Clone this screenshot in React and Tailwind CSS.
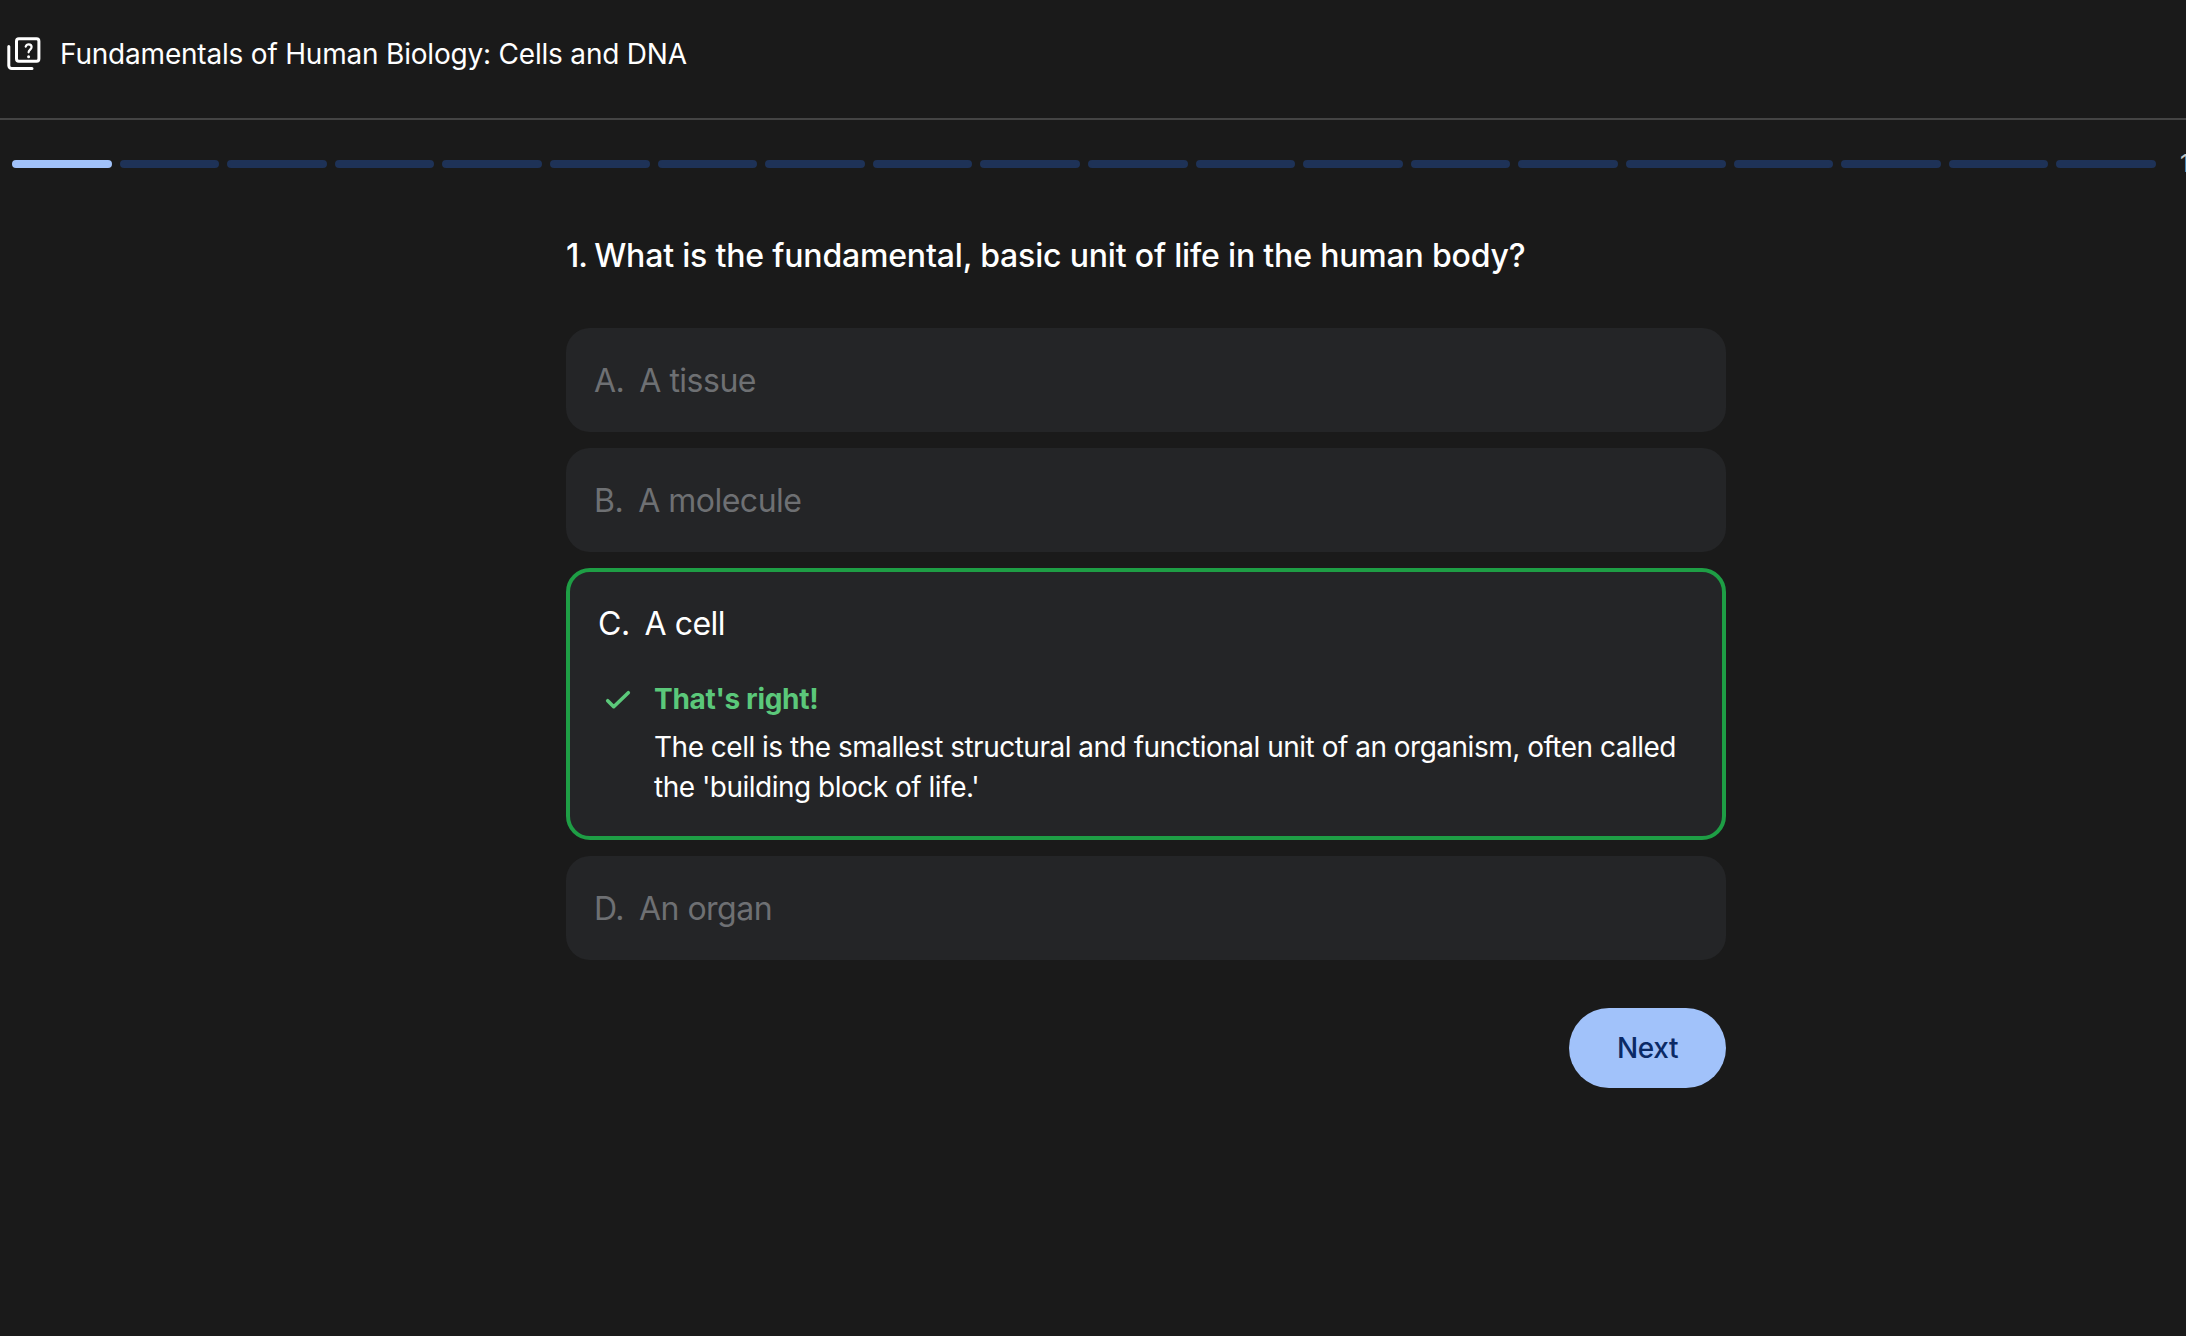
import React from "react";

const font = { fontFamily: "Inter, sans-serif" };
const bars = Array.from({ length: 20 }, (_, i) => i);

const QuizIcon = () => (
  <svg
    viewBox="0 0 40 40"
    className="h-10 w-10 shrink-0"
    fill="none"
    stroke="#ffffff"
    strokeLinecap="round"
    strokeLinejoin="round"
  >
    <rect x="12.5" y="4.8" width="22.4" height="22.4" rx="2.4" strokeWidth="3" />
    <path d="M4.8 12.5V31.5a3 3 0 0 0 3 3H28" strokeWidth="3" />
    <path
      d="M21.7 12.6c.5-1.5 1.6-2.2 3-2.2 1.7 0 2.9 1.1 2.9 2.7 0 2.4-3 2.6-3 5.2"
      strokeWidth="2.2"
    />
    <circle cx="24.6" cy="22.8" r="1.5" fill="#ffffff" stroke="none" />
  </svg>
);

const CheckIcon = () => (
  <svg
    viewBox="0 0 32 32"
    className="ml-1 mt-[5px] h-8 w-8 shrink-0"
    fill="none"
    stroke="#5bc87a"
    strokeWidth="3.6"
    strokeLinecap="round"
    strokeLinejoin="round"
  >
    <path d="M5.7 16.7l6 6L26.3 8.7" />
  </svg>
);

const Option = ({ letter, text }) => (
  <div className="flex h-[104px] items-center rounded-[24px] bg-[#242527] pl-[28px] pt-px text-[32px] tracking-[-0.5px] text-[#6e7073]">
    <span className="mr-[15px]">{letter}.</span>
    <span>{text}</span>
  </div>
);

const App = () => {
  return (
    <div
      className="h-[1336px] w-[2186px] overflow-hidden bg-[#1a1a1a] text-white"
      style={font}
    >
      <header className="flex h-[120px] items-center border-b-2 border-[#444444] pb-[10px] pl-[4px]">
        <QuizIcon />
        <h1 className="ml-4 text-[28px] leading-10 tracking-[-0.2px]">
          Fundamentals of Human Biology: Cells and DNA
        </h1>
      </header>

      <div className="flex h-[8px] items-center pl-3 pt-0 mt-[40px]">
        <div className="flex w-[2144px] shrink-0 gap-2">
          {bars.map((i) => (
            <div
              key={i}
              className={
                i === 0
                  ? "h-2 flex-1 rounded-full bg-[#a1c2fa]"
                  : "h-2 flex-1 rounded-full bg-[#1e3257]"
              }
            />
          ))}
        </div>
        <span className="ml-[24px] shrink-0 text-[24px] text-[#c4c7c5]">1/20</span>
      </div>

      <main className="ml-[566px] w-[1160px]">
        <h2 className="mb-[52px] mt-[68px] text-[32px] font-medium leading-10 tracking-[-0.18px]">
          <span className="tracking-[-1px]">1. </span>
          What is the fundamental, basic unit of life in the human body?
        </h2>

        <div className="flex flex-col gap-4">
          <Option letter="A" text="A tissue" />
          <Option letter="B" text="A molecule" />

          <div className="h-[272px] rounded-[24px] border-4 border-[#1e9e45] bg-[#242527] px-[28px] pt-[32px]">
            <div className="flex text-[32px] leading-10 tracking-[-0.5px]">
              <span className="mr-[15px]">C.</span>
              <span>A cell</span>
            </div>
            <div className="mt-[35px] flex">
              <CheckIcon />
              <div className="ml-[20px] text-[28px] leading-10 tracking-[-0.5px]">
                <p className="mb-2 font-bold tracking-[-0.3px] text-[#5bc87a]">That's right!</p>
                <p>
                  The cell is the smallest structural and functional unit of an
                  organism, often called the 'building block of life.'
                </p>
              </div>
            </div>
          </div>

          <Option letter="D" text="An organ" />
        </div>

        <div className="mt-[48px] flex justify-end">
          <button className="h-[80px] w-[157px] rounded-full bg-[#a1c2fa] text-[28px] font-medium tracking-[-0.4px] text-[#0b2a66]">
            Next
          </button>
        </div>
      </main>
    </div>
  );
};

export default App;
